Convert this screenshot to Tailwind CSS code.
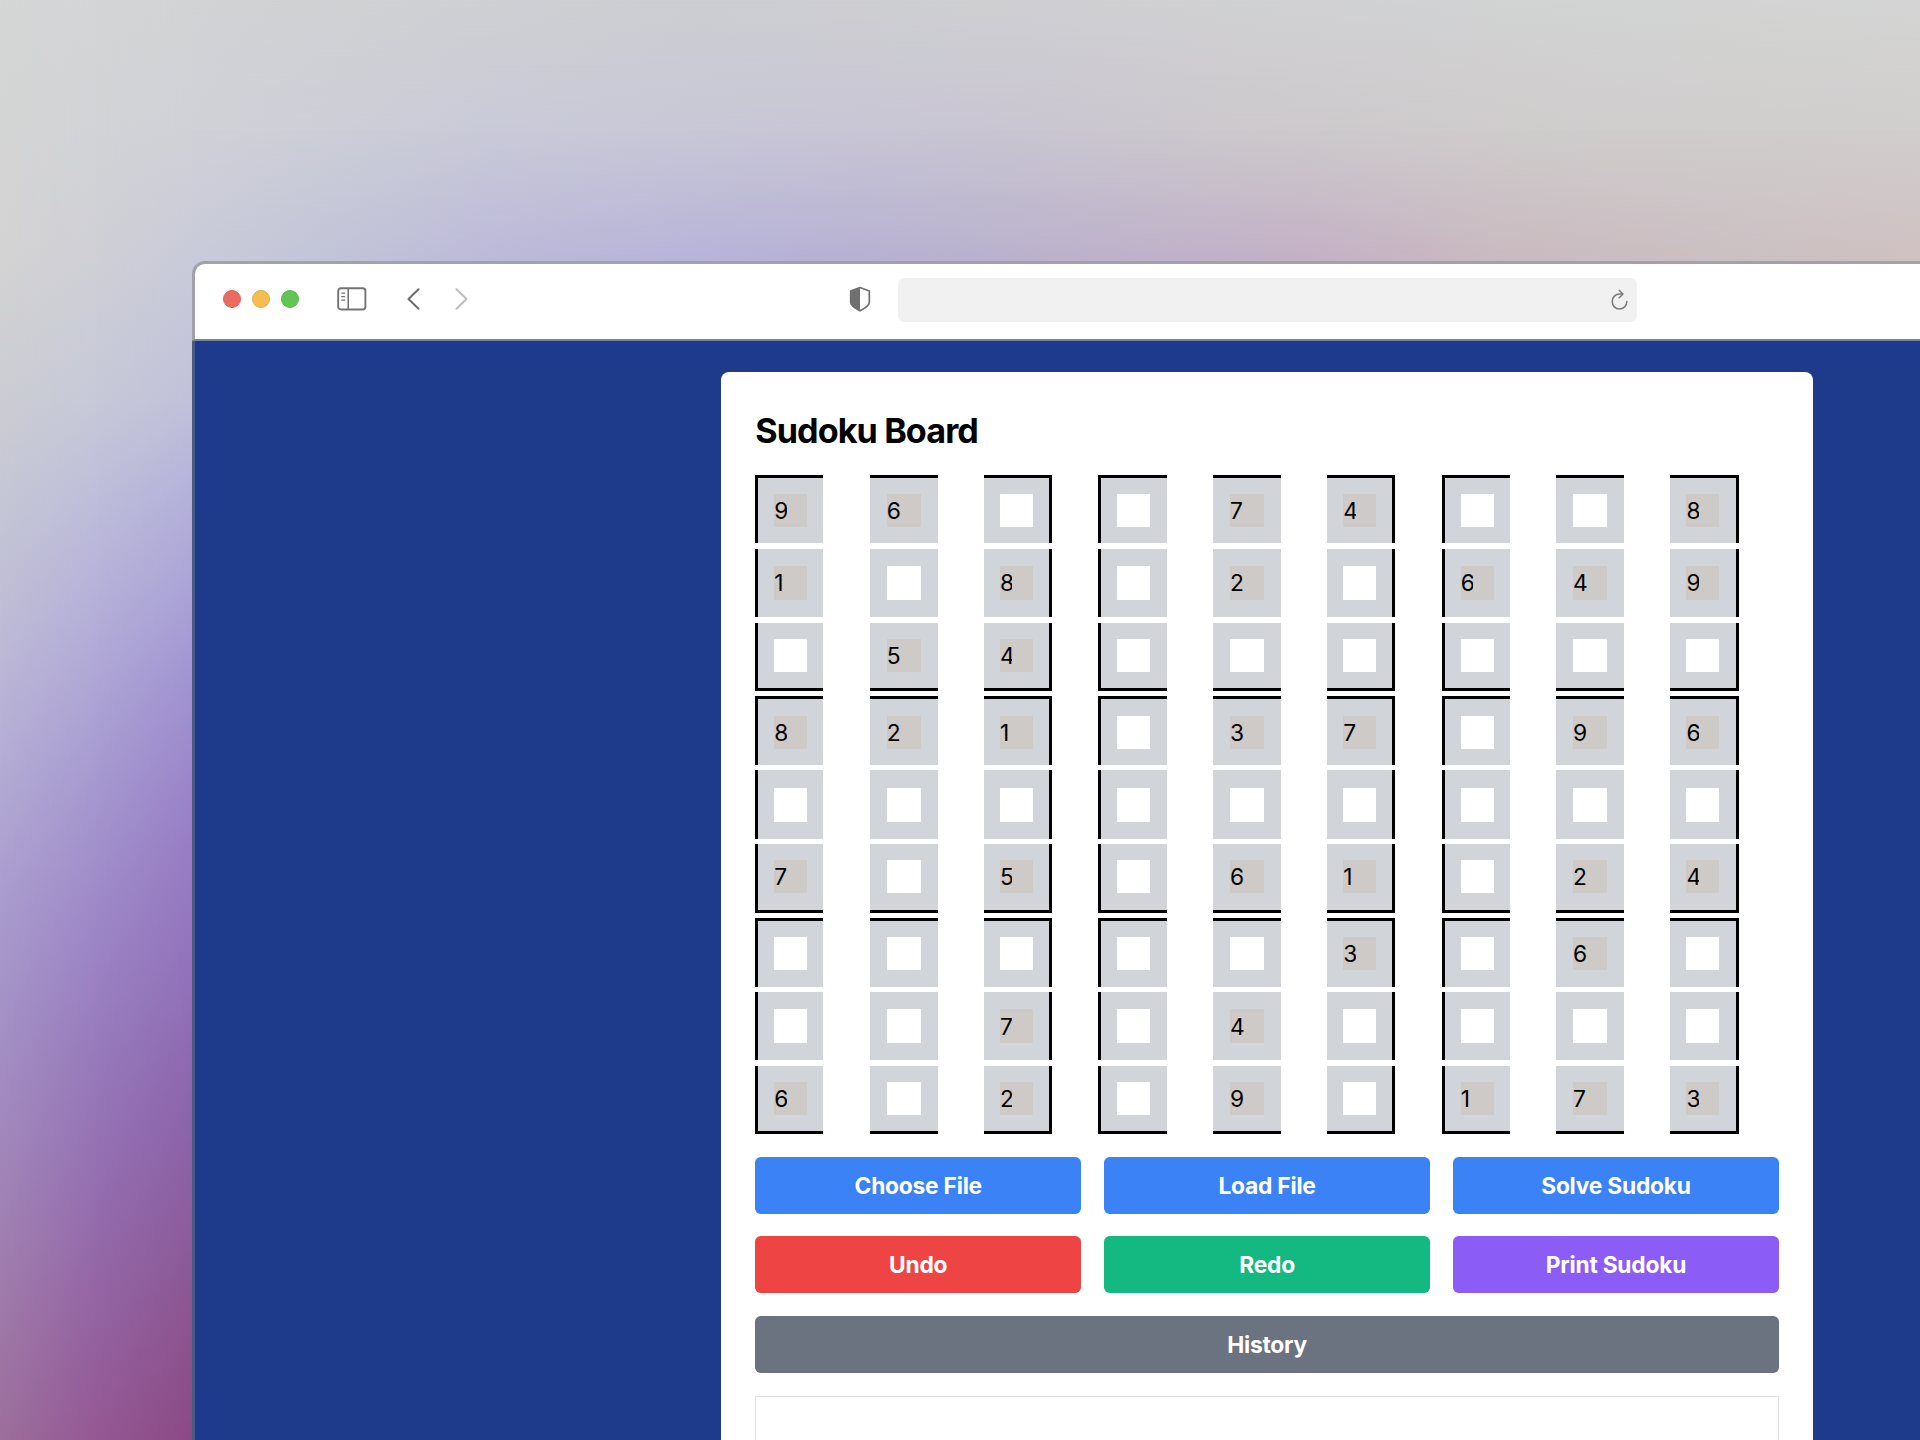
<!DOCTYPE html>
<html lang="en">
<head>
<meta charset="utf-8">
<title>Sudoku Board</title>
<script src="https://cdn.jsdelivr.net/npm/@tailwindcss/browser@4"></script>
</head>
<body class="font-[Inter,sans-serif] text-black">
<div class="grid h-[1440px] w-[1920px] grid-cols-[192px_1728px] grid-rows-[261px_1179px] overflow-hidden">

  <!-- Wallpaper, left strip -->
  <div class="relative col-start-1 row-start-1 row-span-2">
    <div class="absolute inset-0 bg-[linear-gradient(to_bottom,#d5d6d6_0px,#d4d4d4_240px,#cccdd3_400px,#c5c7d5_500px,#bfbcd6_620px,#b5aed5_750px,#aa9cce_900px,#a593c7_1000px,#a28abe_1110px,#a07fb0_1250px,#9e76a4_1350px,#9c6f9c_1440px)]"></div>
    <div class="absolute inset-0 bg-[linear-gradient(to_bottom,#d4d5d6_0px,#d2d3d6_130px,#cfcfd6_262px,#c6c9d8_400px,#bebdda_500px,#b1aad7_650px,#a496ce_800px,#9c84c5_950px,#977abb_1050px,#946daf_1200px,#9463a1_1320px,#955894_1440px)] [mask-image:linear-gradient(to_right,transparent_0px,black_96px)]"></div>
    <div class="absolute inset-0 bg-[linear-gradient(to_bottom,#d2d3d5_0px,#d0d1d7_130px,#c9cad9_262px,#c0c1d9_400px,#b3b0d9_500px,#a9a1d6_600px,#9f90d0_700px,#977cc4_850px,#906fb7_1000px,#8d65ad_1100px,#8b5ea0_1200px,#8b5692_1300px,#8b4a85_1440px)] [mask-image:linear-gradient(to_right,transparent_96px,black_192px)]"></div>
  </div>

  <!-- Wallpaper, top strip -->
  <div class="relative col-start-2 row-start-1 row-span-2">
    <div class="absolute inset-0 bg-[linear-gradient(to_right,#d2d3d5_0px,#d1d2d4_108px,#cdced2_508px,#d0d0d3_908px,#d2d3d3_1308px,#d4d5d4_1728px)]"></div>
    <div class="absolute inset-0 bg-[linear-gradient(to_right,#d0d1d7_0px,#c9cad8_308px,#c8c6d6_608px,#c9c5d2_808px,#cdc9cc_1058px,#d0cdcd_1408px,#d1cecd_1728px)] [mask-image:linear-gradient(to_bottom,transparent_0px,black_130px)]"></div>
    <div class="absolute inset-0 bg-[linear-gradient(to_right,#c9cad9_0px,#c2c5d8_108px,#bbb8d9_308px,#b7b2d8_508px,#b6b0d3_658px,#b9b1cd_808px,#c3afc5_1108px,#c9b9bf_1308px,#cbbfc2_1558px,#d0c0c1_1728px)] [mask-image:linear-gradient(to_bottom,transparent_130px,black_262px)]"></div>
  </div>

  <!-- Browser window -->
  <div class="relative col-start-2 row-start-2 flex flex-col">
    <div class="flex h-[80px] shrink-0 items-center rounded-tl-[13px] border-t-3 border-l-3 border-b-2 border-t-[#a3a2a8] border-b-[#7583a2] border-l-[#a0a1ab] bg-white pb-[5px] pl-[27.500px]">
      <div class="flex gap-[11.300px]">
        <div class="size-[18px] rounded-full border border-[#dd6158] bg-[#ec6b60]"></div>
        <div class="size-[18px] rounded-full border border-[#e0ab48] bg-[#f5bd4f]"></div>
        <div class="size-[18px] rounded-full border border-[#58b74a] bg-[#61c454]"></div>
      </div>
      <svg class="ml-[37.500px] h-[24px] w-[30px]" viewBox="0 0 30 24" fill="none" stroke="#737373">
        <rect x="1.2" y="1.2" width="27.2" height="21.3" rx="2.8" stroke-width="1.9"/>
        <path d="M11.2 1.5v21" stroke-width="1.6"/>
        <path d="M4.2 6.1h4M4.2 9.6h4M4.2 13.1h4" stroke-width="1.3"/>
      </svg>
      <svg class="ml-[40px] h-[22px] w-[13px]" viewBox="0 0 13 22" fill="none" stroke="#6e6e6e" stroke-width="2" stroke-linecap="round" stroke-linejoin="round"><path d="M11.5 1.3 1.5 11l10 9.700"/></svg>
      <svg class="ml-[35px] h-[22px] w-[13px]" viewBox="0 0 13 22" fill="none" stroke="#bdbdbd" stroke-width="2" stroke-linecap="round" stroke-linejoin="round"><path d="M1.500 1.300l10 9.700-10 9.700"/></svg>
      <svg class="ml-[381px] h-[26px] w-[22px]" viewBox="0 0 22 26">
        <path d="M11 1.500 20.300 5v11.500c0 3.500-5 6-9.300 8.300-4.300-2.300-9.300-4.800-9.300-8.300V5z" fill="#fff" stroke="#6f6f6f" stroke-width="1.700" stroke-linejoin="round"/>
        <path d="M11 1.500v23.300c-4.300-2.300-9.300-4.800-9.300-8.300V5z" fill="#6f6f6f"/>
      </svg>
      <div class="mt-[2px] ml-[27px] flex h-[44px] w-[739px] items-center justify-end rounded-[6px] bg-[#f1f1f1] pr-[8px]">
        <svg class="h-[22px] w-[19px]" viewBox="0 0 19 22" fill="none" stroke="#7b7b7b" stroke-width="1.500" stroke-linecap="round" stroke-linejoin="round">
          <path d="M16.800 12.500a7.300 7.600 0 1 1-7.300-7.600h2.800"/><path d="M9.200 1.300l3.800 3.700-3.800 3.700"/>
        </svg>
      </div>
    </div>

    <!-- Page -->
    <div class="flex grow items-start border-l-3 border-[#4a5a86] bg-[#1e3a8a] pt-[31.400px] pl-[526px]">
      <main class="h-[1300px] w-[1092.200px] shrink-0 rounded-[8px] bg-white px-[34.200px] pt-[34.200px]">
        <h1 class="mb-[21.200px] text-[34.160px] leading-[47px] font-bold tracking-[-0.900px]">Sudoku Board</h1>
        <div id="board" class="grid grid-cols-9 gap-x-[5.690px] gap-y-[5.620px]"></div>
        <div class="mt-[22.400px] grid grid-cols-3 gap-[22.800px] text-center text-[22.770px] leading-[58.600px] font-bold tracking-[-0.230px] text-white">
          <div class="h-[56.900px] rounded-[5.700px] bg-[#3b82f6]">Choose File</div>
          <div class="h-[56.900px] rounded-[5.700px] bg-[#3b82f6]">Load File</div>
          <div class="h-[56.900px] rounded-[5.700px] bg-[#3b82f6]">Solve Sudoku</div>
          <div class="h-[56.900px] rounded-[5.700px] bg-[#ef4444]">Undo</div>
          <div class="h-[56.900px] rounded-[5.700px] bg-[#14b881]">Redo</div>
          <div class="h-[56.900px] rounded-[5.700px] bg-[#8b5cf6]">Print Sudoku</div>
          <div class="col-span-3 h-[56.900px] rounded-[5.700px] bg-[#6b7280]">History</div>
          <div class="col-span-3 h-[300px] border border-[#e3e4e6]"></div>
        </div>
      </main>
    </div>
  </div>
</div>
<script>
  const rows = ["96..74..8", "1.8.2.649", ".54......", "821.37.96", ".........", "7.5.61.24", ".....3.6.", "..7.4....", "6.2.9.173"];
  const board = document.getElementById("board");
  rows.forEach((row, r) => [...row].forEach((value, c) => {
    const cell = document.createElement("div");
    let classes = "flex h-[68.300px] w-[68.300px] items-center justify-center border-black bg-[#d1d5d9]";
    if (r % 3 === 0) classes += " border-t-3";
    if (r % 3 === 2) classes += " border-b-3";
    if (c % 3 === 0) classes += " border-l-3";
    if (c % 3 === 2) classes += " border-r-3";
    cell.className = classes;
    const field = document.createElement("div");
    field.className = "flex items-center " + (r % 3 === 1 ? "h-[34px] " : "h-[33px] ") + (c % 3 === 1 ? "w-[34px] " : "w-[33px] ") + (value === "." ? "bg-white" : "bg-[#cecac8]");
    if (value !== ".") {
      const digit = document.createElement("span");
      digit.className = "block overflow-hidden text-[22.770px] leading-[33px] " + (c % 3 === 1 ? "w-[14px]" : "w-[12.300px]");
      digit.textContent = value;
      field.append(digit);
    }
    cell.append(field);
    board.append(cell);
  }));
</script>
</body>
</html>
